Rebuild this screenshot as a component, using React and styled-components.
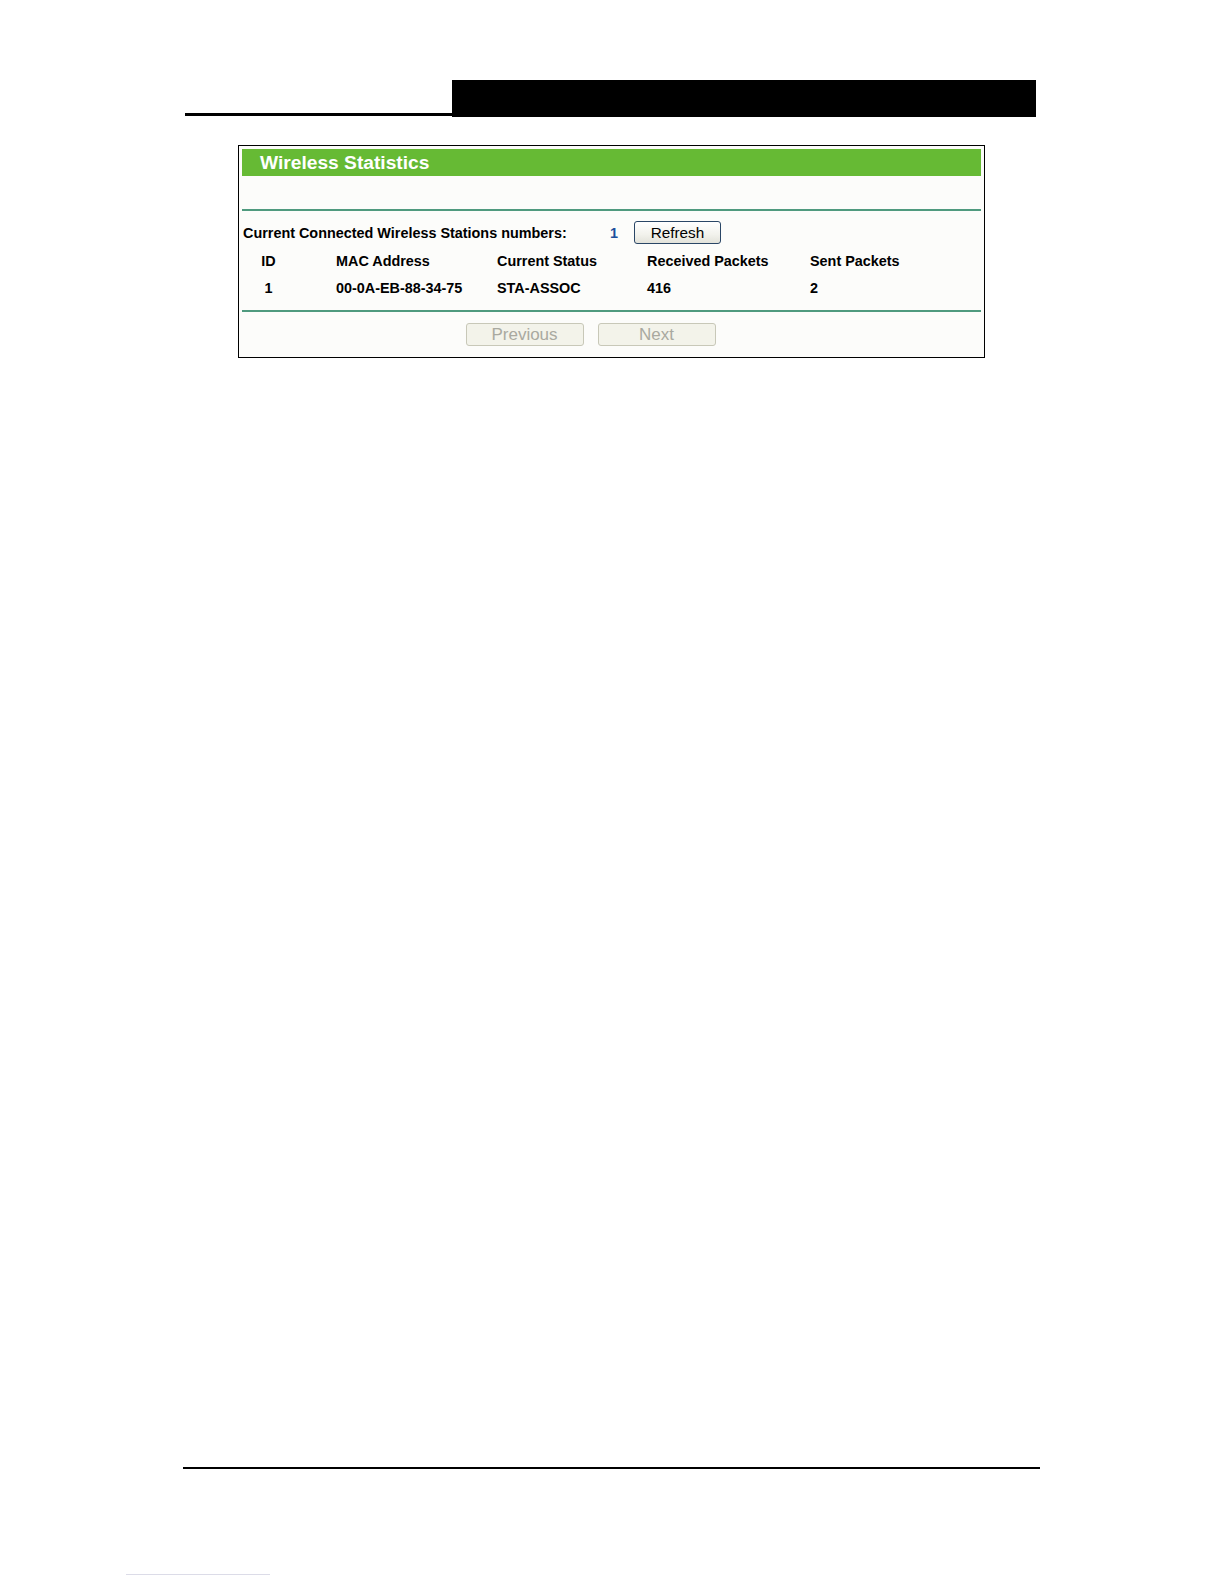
import React from "react";
import styled, { createGlobalStyle } from "styled-components";

const GlobalStyle = createGlobalStyle`
    html, body {
        margin: 0;
        padding: 0;
        background: #ffffff;
        overflow: hidden;
    }
    body {
        font-family: "Liberation Sans", Arial, sans-serif;
        color: #000;
    }
`;

const Page = styled.div`
    display: flex;
    flex-direction: column;
    height: 100vh;
    box-sizing: border-box;
    padding-top: 80px;
`;

const HeaderBar = styled.div`
    display: flex;
    align-items: flex-end;
    margin-left: 185px;
    width: 851px;
    height: 37px;
`;

const HeaderRule = styled.div`
    width: 267px;
    height: 3px;
    margin-bottom: 1px;
    background: #000;
`;

const HeaderBlock = styled.div`
    flex: 1;
    height: 37px;
    background: #000;
`;

const Panel = styled.div`
    margin-top: 28px;
    margin-left: 238px;
    width: 747px;
    box-sizing: border-box;
    border: 1px solid #000;
    padding: 3px;
    background: #fcfcfa;
    display: flex;
    flex-direction: column;
`;

const TitleBar = styled.div`
    height: 27px;
    background: #66ba34;
    display: flex;
    align-items: center;
    padding-left: 18px;
    color: #fff;
    font-weight: bold;
    font-size: 19.2px;
`;

const Divider = styled.div`
    height: 2px;
    margin-top: ${p => p.$top}px;
    background: #4f9a7e;
`;

const CountRow = styled.div`
    display: flex;
    align-items: center;
    height: 23px;
    margin-top: 10px;
    padding-left: 1px;
    font-size: 14.4px;
    font-weight: bold;
`;

const CountLabel = styled.span`
    width: 367px;
    white-space: nowrap;
`;

const CountValue = styled.span`
    color: #1d4f9c;
    width: 24px;
`;

const Button = styled.button`
    font-family: "Liberation Sans", Arial, sans-serif;
    height: 23px;
    width: ${p => p.$w}px;
    box-sizing: border-box;
    border-radius: 3px;
    padding: 0;
    font-size: ${p => (p.disabled ? 17 : 15.3)}px;
    border: 1px solid ${p => (p.disabled ? "#c8c8b8" : "#2a4666")};
    color: ${p => (p.disabled ? "#a9a9a0" : "#000")};
    background: ${p => (p.disabled ? "#f3f3ea" : "linear-gradient(#ffffff, #f2f2ec 60%, #e2e2da)")};
`;

const Table = styled.div`
    display: flex;
    flex-direction: column;
    padding-left: 19px;
`;

const TableRow = styled.div`
    display: grid;
    grid-template-columns: 75px 161px 150px 163px 1fr;
    align-items: center;
    height: 22px;
    margin-top: ${p => p.$top}px;
    font-size: 14.4px;
    font-weight: bold;
`;

const Cell = styled.div`
    white-space: nowrap;
    ${p => p.$id && "width: 15px; text-align: center;"}
`;

const Pager = styled.div`
    display: flex;
    justify-content: center;
    gap: 14px;
    margin-top: 11px;
    margin-bottom: 8px;
    padding-right: 42px;
`;

const Footer = styled.div`
    margin-top: auto;
    display: flex;
    flex-direction: column;
    padding-bottom: 9px;
`;

const FooterRule = styled.div`
    margin-left: 183px;
    width: 857px;
    height: 2px;
    background: #000;
`;

const FooterLink = styled.div`
    margin-top: 105px;
    margin-left: 126px;
    width: 144px;
    height: 1px;
    background: #dcdce8;
`;

const columns = ["ID", "MAC Address", "Current Status", "Received Packets", "Sent Packets"];
const stations = [{ id: 1, mac: "00-0A-EB-88-34-75", status: "STA-ASSOC", received: 416, sent: 2 }];

export default function App() {
    return (
        <>
            <GlobalStyle />
            <Page>
                <HeaderBar>
                    <HeaderRule />
                    <HeaderBlock />
                </HeaderBar>
                <Panel>
                    <TitleBar>Wireless Statistics</TitleBar>
                    <Divider $top={33} />
                    <CountRow>
                        <CountLabel>Current Connected Wireless Stations numbers:</CountLabel>
                        <CountValue>{stations.length}</CountValue>
                        <Button $w={87}>Refresh</Button>
                    </CountRow>
                    <Table>
                        <TableRow $top={6}>
                            {columns.map((c, i) => (
                                <Cell key={c} $id={i === 0}>
                                    {c}
                                </Cell>
                            ))}
                        </TableRow>
                        {stations.map(s => (
                            <TableRow key={s.id} $top={5}>
                                <Cell $id>{s.id}</Cell>
                                <Cell>{s.mac}</Cell>
                                <Cell>{s.status}</Cell>
                                <Cell>{s.received}</Cell>
                                <Cell>{s.sent}</Cell>
                            </TableRow>
                        ))}
                    </Table>
                    <Divider $top={11} />
                    <Pager>
                        <Button $w={118} disabled>
                            Previous
                        </Button>
                        <Button $w={118} disabled>
                            Next
                        </Button>
                    </Pager>
                </Panel>
                <Footer>
                    <FooterRule />
                    <FooterLink />
                </Footer>
            </Page>
        </>
    );
}
